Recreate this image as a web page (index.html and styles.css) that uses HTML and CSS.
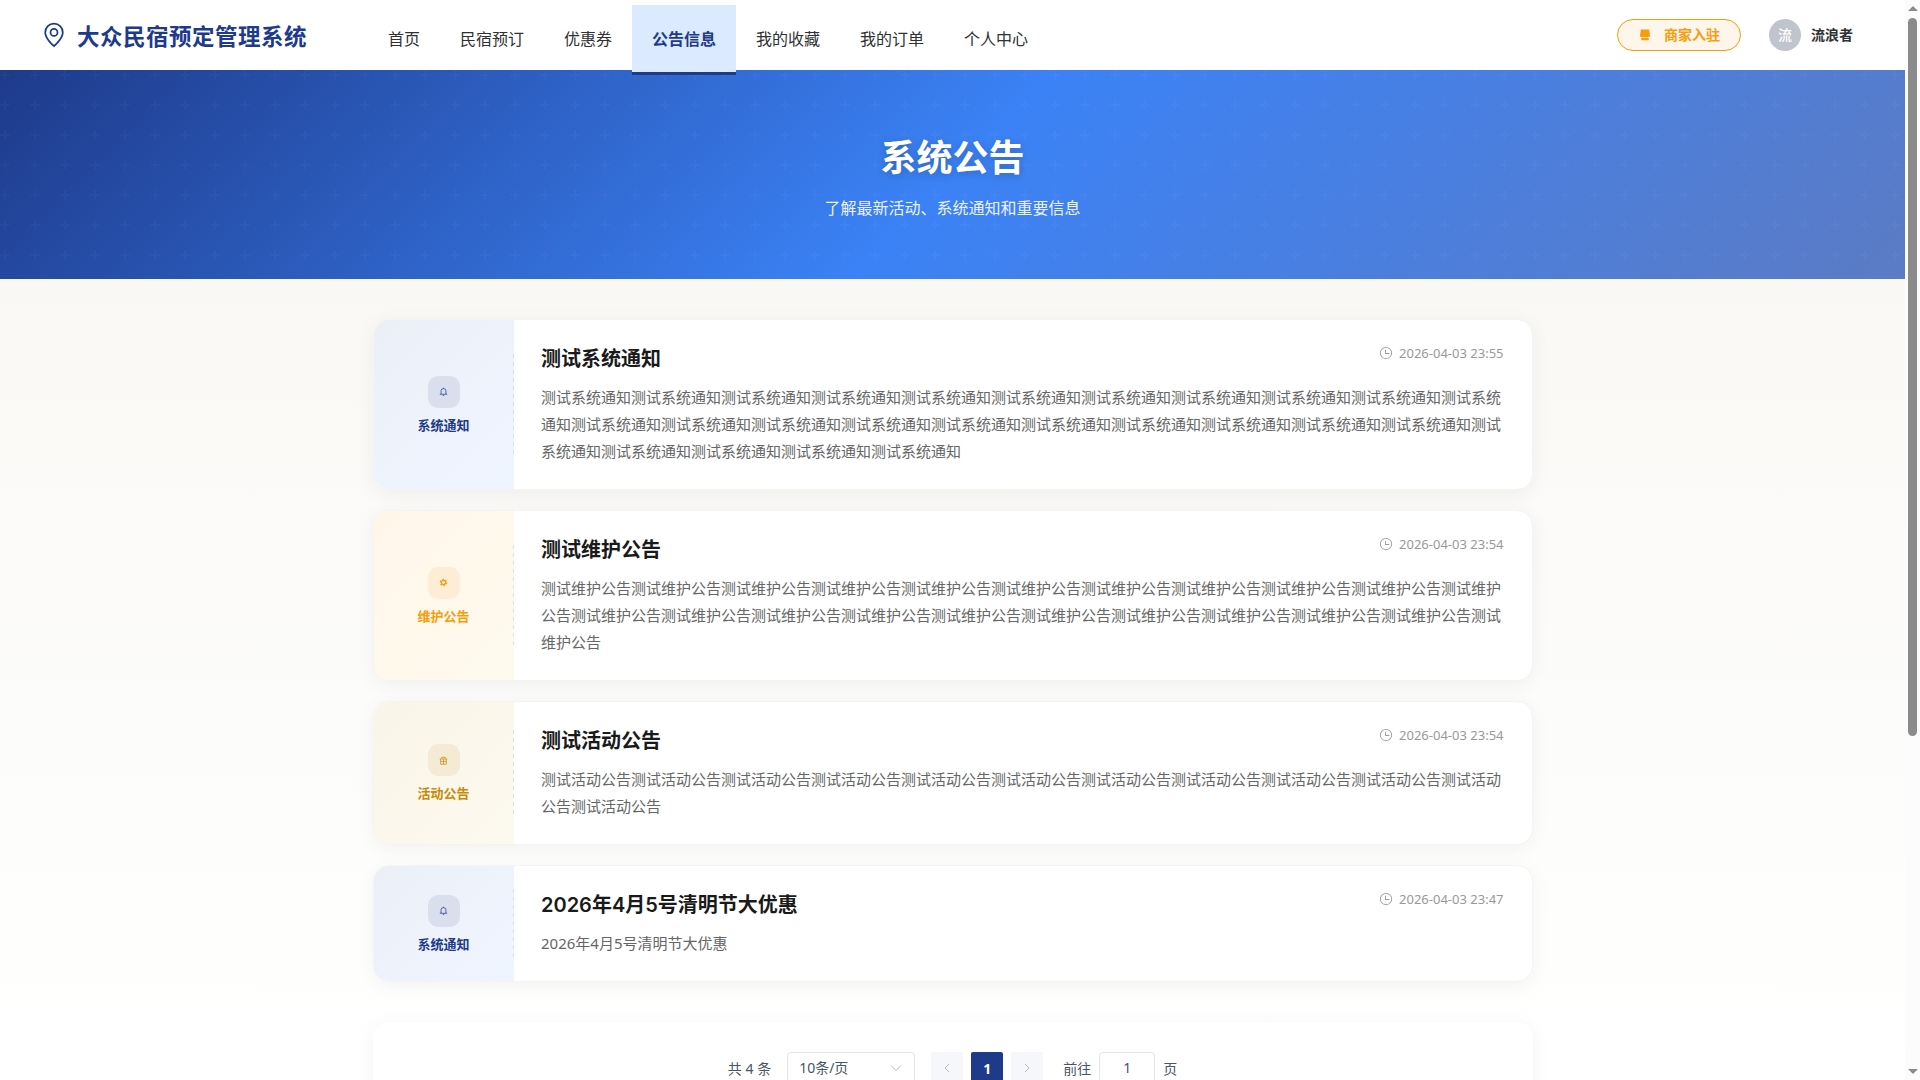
FILE: index.html
```html
<!DOCTYPE html>
<html lang="zh-CN">
<head>
    <meta charset="UTF-8">
    <meta name="viewport" content="width=device-width, initial-scale=1.0">
    <title>系统公告 - 大众民宿预定管理系统</title>
    <link rel="stylesheet" href="styles.css">
</head>
<body>
    <!-- Shared icons -->
    <svg class="icon-defs" aria-hidden="true">
        <symbol id="icon-bell" viewBox="0 0 10 10">
            <path d="M2.300 7.800V4.200q0-2.400 2.700-2.400t2.700 2.400v3.600M.9 8.100h8.200M5 .8v1M4.200 9.400h1.600" fill="none" stroke="currentColor" stroke-width=".8"/>
        </symbol>
        <symbol id="icon-clock" viewBox="0 0 1024 1024">
            <path fill="currentColor" d="M512 896a384 384 0 1 0 0-768 384 384 0 0 0 0 768m0 64a448 448 0 1 1 0-896 448 448 0 0 1 0 896"/>
            <path fill="currentColor" d="M480 256a32 32 0 0 1 32 32v256a32 32 0 0 1-64 0V288a32 32 0 0 1 32-32"/>
            <path fill="currentColor" d="M480 512h256q32 0 32 32t-32 32H480q-32 0-32-32t32-32"/>
        </symbol>
    </svg>

    <div class="window">
        <div class="page">
            <header class="header">
                <div class="logo">
                    <svg class="logo-icon" viewBox="0 0 1024 1024">
                        <path fill="currentColor" d="M800 416a288 288 0 1 0-576 0c0 118.144 94.528 272.128 288 456.576C705.472 688.128 800 534.144 800 416M512 960C277.312 746.688 160 565.312 160 416a352 352 0 0 1 704 0c0 149.312-117.312 330.688-352 544"/>
                        <path fill="currentColor" d="M512 512a96 96 0 1 0 0-192 96 96 0 0 0 0 192m0 64a160 160 0 1 1 0-320 160 160 0 0 1 0 320"/>
                    </svg>
                    <span class="logo-text">大众民宿预定管理系统</span>
                </div>
                <nav class="nav">
                    <a class="nav-item" href="#">首页</a>
                    <a class="nav-item" href="#">民宿预订</a>
                    <a class="nav-item" href="#">优惠券</a>
                    <a class="nav-item active" href="#">公告信息</a>
                    <a class="nav-item" href="#">我的收藏</a>
                    <a class="nav-item" href="#">我的订单</a>
                    <a class="nav-item" href="#">个人中心</a>
                </nav>
                <div class="user-area">
                    <a class="merchant-btn" href="#">
                        <svg class="merchant-icon" viewBox="0 0 12 12">
                            <path fill="currentColor" d="M1.800.5h8.400l.8 6.600a1 1 0 0 1-1.700.6 1.200 1.200 0 0 1-2.200 0 1.200 1.200 0 0 1-2.200 0 1.200 1.200 0 0 1-2.200 0A1 1 0 0 1 1 7.100zM2.200 9h7.600v1.600a.7.7 0 0 1-.7.7H2.900a.7.7 0 0 1-.7-.7z"/>
                        </svg>
                        <span>商家入驻</span>
                    </a>
                    <div class="user">
                        <span class="avatar">流</span>
                        <span class="user-name">流浪者</span>
                    </div>
                </div>
            </header>

            <section class="hero">
                <h1 class="hero-title">系统公告</h1>
                <p class="hero-subtitle">了解最新活动、系统通知和重要信息</p>
            </section>

            <main class="container">
                <article class="notice notice-system">
                    <div class="notice-side">
                        <div class="notice-icon"><svg viewBox="0 0 10 10"><use href="#icon-bell"/></svg></div>
                        <span class="notice-type">系统通知</span>
                    </div>
                    <div class="notice-body">
                        <div class="notice-head">
                            <h2 class="notice-title">测试系统通知</h2>
                            <span class="notice-time"><svg><use href="#icon-clock"/></svg>2026-04-03 23:55</span>
                        </div>
                        <p class="notice-text">测试系统通知测试系统通知测试系统通知测试系统通知测试系统通知测试系统通知测试系统通知测试系统通知测试系统通知测试系统通知测试系统通知测试系统通知测试系统通知测试系统通知测试系统通知测试系统通知测试系统通知测试系统通知测试系统通知测试系统通知测试系统通知测试系统通知测试系统通知测试系统通知测试系统通知测试系统通知</p>
                    </div>
                </article>

                <article class="notice notice-maintain">
                    <div class="notice-side">
                        <div class="notice-icon">
                            <svg viewBox="0 0 10 10">
                                <circle cx="5" cy="5" r="2.300" fill="none" stroke="currentColor" stroke-width="1.300"/>
                                <circle cx="5" cy="5" r="3.500" fill="none" stroke="currentColor" stroke-width="1.400" stroke-dasharray="1.830 1.830"/>
                            </svg>
                        </div>
                        <span class="notice-type">维护公告</span>
                    </div>
                    <div class="notice-body">
                        <div class="notice-head">
                            <h2 class="notice-title">测试维护公告</h2>
                            <span class="notice-time"><svg><use href="#icon-clock"/></svg>2026-04-03 23:54</span>
                        </div>
                        <p class="notice-text">测试维护公告测试维护公告测试维护公告测试维护公告测试维护公告测试维护公告测试维护公告测试维护公告测试维护公告测试维护公告测试维护公告测试维护公告测试维护公告测试维护公告测试维护公告测试维护公告测试维护公告测试维护公告测试维护公告测试维护公告测试维护公告测试维护公告</p>
                    </div>
                </article>

                <article class="notice notice-activity">
                    <div class="notice-side">
                        <div class="notice-icon">
                            <svg viewBox="0 0 10 10">
                                <path d="M.8 3.300h8.400M1.800 3.300v5.800h6.400V3.300M2 6h6M5 3.300V9M3 3V1.500h4V3" fill="none" stroke="currentColor" stroke-width=".8"/>
                            </svg>
                        </div>
                        <span class="notice-type">活动公告</span>
                    </div>
                    <div class="notice-body">
                        <div class="notice-head">
                            <h2 class="notice-title">测试活动公告</h2>
                            <span class="notice-time"><svg><use href="#icon-clock"/></svg>2026-04-03 23:54</span>
                        </div>
                        <p class="notice-text">测试活动公告测试活动公告测试活动公告测试活动公告测试活动公告测试活动公告测试活动公告测试活动公告测试活动公告测试活动公告测试活动公告测试活动公告</p>
                    </div>
                </article>

                <article class="notice notice-system">
                    <div class="notice-side">
                        <div class="notice-icon"><svg viewBox="0 0 10 10"><use href="#icon-bell"/></svg></div>
                        <span class="notice-type">系统通知</span>
                    </div>
                    <div class="notice-body">
                        <div class="notice-head">
                            <h2 class="notice-title">2026年4月5号清明节大优惠</h2>
                            <span class="notice-time"><svg><use href="#icon-clock"/></svg>2026-04-03 23:47</span>
                        </div>
                        <p class="notice-text">2026年4月5号清明节大优惠</p>
                    </div>
                </article>

                <div class="pagination">
                    <span class="total">共 4 条</span>
                    <div class="page-size">
                        <span>10条/页</span>
                        <svg viewBox="0 0 14 14"><path d="M2 4.500l5 5 5-5"/></svg>
                    </div>
                    <div class="pager">
                        <button class="page-btn"><svg viewBox="0 0 14 14"><path d="M9 3L5 7l4 4"/></svg></button>
                        <button class="page-btn current">1</button>
                        <button class="page-btn"><svg viewBox="0 0 14 14"><path d="M5 3l4 4-4 4"/></svg></button>
                    </div>
                    <div class="jump">
                        <span class="jump-label">前往</span>
                        <span class="jump-input">1</span>
                        <span class="jump-label">页</span>
                    </div>
                </div>
            </main>
        </div>

        <div class="scrollbar">
            <span class="arrow arrow-up"></span>
            <span class="thumb"></span>
            <span class="arrow arrow-down"></span>
        </div>
    </div>
</body>
</html>
```
FILE: styles.css
```css
* {
    box-sizing: border-box;
}

body {
    margin: 0;
    height: 1080px;
    overflow: hidden;
    font-family: "Noto Sans", "Noto Sans CJK SC", sans-serif;
    font-size: 14px;
    color: #303133;
}

h1, h2, p {
    margin: 0;
}

a {
    color: inherit;
    text-decoration: none;
}

.icon-defs {
    display: none;
}

.window {
    display: flex;
    height: 1080px;
}

.page {
    width: 1905px;
    height: 1080px;
    overflow: hidden;
    background: linear-gradient(180deg, #f9f8f5 0%, #f9f8f5 25%, #fefefd 85%, #ffffff 100%);
}

/* Header */
.header {
    display: flex;
    align-items: center;
    height: 70px;
    padding: 0 52px 0 40px;
    background: #fff;
}

.logo {
    display: flex;
    align-items: center;
    gap: 9px;
    width: 328px;
    color: #1e3a8a;
}

.logo-icon {
    width: 28px;
    height: 28px;
}

.logo-text {
    font-size: 22.5px;
    font-weight: 700;
    letter-spacing: 0.5px;
    line-height: 34px;
    white-space: nowrap;
    padding-top: 4px;
}

.nav {
    display: flex;
    align-self: flex-start;
    padding-top: 5px;
    z-index: 2;
}

.nav-item {
    height: 70px;
    padding: 1px 20px 0;
    border-bottom: 3px solid transparent;
    font-size: 16px;
    line-height: 67px;
}

.nav-item.active {
    background: #dbeafe;
    border-bottom-color: #1e3a8a;
    color: #1e3a8a;
    font-weight: 600;
}

.user-area {
    display: flex;
    align-items: center;
    gap: 28px;
    margin-left: auto;
}

.merchant-btn {
    display: flex;
    align-items: center;
    gap: 13px;
    width: 124px;
    height: 32px;
    padding-left: 21px;
    border: 1px solid #f59e0b;
    border-radius: 16px;
    background: #fef5eb;
    color: #f59e0b;
    font-weight: 600;
}

.merchant-btn span,
.user-name {
    padding-bottom: 2px;
}

.merchant-icon {
    width: 12px;
    height: 12px;
}

.user {
    display: flex;
    align-items: center;
    gap: 10px;
}

.avatar {
    width: 32px;
    height: 32px;
    border-radius: 50%;
    background: #c0c4cc;
    color: #fff;
    line-height: 32px;
    text-align: center;
    font-weight: 500;
}

.user-name {
    font-weight: 600;
}

/* Banner */
.hero {
    height: 209px;
    padding-top: 60px;
    text-align: center;
    color: #fff;
    background:
        url("data:image/svg+xml,%3Csvg width='30' height='30' xmlns='http://www.w3.org/2000/svg'%3E%3Cpath fill='%23fff' fill-opacity='.022' d='M6 4V0H4v4H0v2h4v4h2V6h4V4H6z'/%3E%3C/svg%3E"),
        linear-gradient(135deg, #1e3a8a 0%, #3b82f6 50%, #5b7bc4 100%);
}

.hero-title {
    font-size: 36px;
    font-weight: 700;
    line-height: 56px;
    text-shadow: 0 2px 8px rgba(0, 0, 0, 0.2);
}

.hero-subtitle {
    margin-top: 9px;
    font-size: 16px;
    line-height: 26px;
    opacity: 0.9;
}

/* Notice list */
.container {
    width: 1160px;
    margin: 40px auto 0;
    display: flex;
    flex-direction: column;
    gap: 20px;
}

.notice {
    display: flex;
    overflow: hidden;
    border: 1px solid #f5f4f2;
    border-radius: 16px;
    background: #fff;
    box-shadow: 0 4px 20px rgba(0, 0, 0, 0.05);
}

.notice-side {
    position: relative;
    display: flex;
    flex-direction: column;
    align-items: center;
    justify-content: center;
    gap: 8px;
    width: 140px;
}

/* dashed divider on the right edge */
.notice-side::after {
    content: "";
    position: absolute;
    right: 0;
    top: 20%;
    width: 1px;
    height: 60%;
    background: repeating-linear-gradient(180deg, #dcdfe6 0, #dcdfe6 4px, transparent 4px, transparent 8px);
}

.notice-icon {
    display: flex;
    align-items: center;
    justify-content: center;
    width: 32px;
    height: 32px;
    border-radius: 10px;
}

.notice-icon svg {
    width: 9px;
    height: 9px;
}

.notice-type {
    font-size: 13px;
    font-weight: 600;
    line-height: 18px;
}

.notice-system .notice-side {
    background: linear-gradient(135deg, #eceff3 0%, #ecf0f9 15%, #eff5ff 100%);
    color: #1e3a8a;
}

.notice-system .notice-icon {
    background: #dadfee;
}

.notice-maintain .notice-side {
    background: linear-gradient(135deg, #fff6ea 0%, #fefaed 100%);
    color: #f59e0b;
}

.notice-maintain .notice-icon {
    background: #feedd5;
}

.notice-activity .notice-side {
    background: linear-gradient(135deg, #faf5e9 0%, #fcf9ee 100%);
    color: #ca8a04;
}

.notice-activity .notice-icon {
    background: #f5ead5;
}

.notice-body {
    flex: 1;
    padding: 24px 28px 24px 27.5px;
}

.notice-head {
    display: flex;
    justify-content: space-between;
    margin-bottom: 12px;
}

.notice-title {
    height: 28px;
    font-family: Inter, "Noto Sans CJK SC", sans-serif;
    font-size: 20px;
    font-weight: 600;
    line-height: 30px;
    color: #1a1a1a;
}

.notice-time {
    display: flex;
    align-items: center;
    gap: 6px;
    height: 18px;
    font-size: 13px;
    color: #999;
}

.notice-time svg {
    width: 14px;
    height: 14px;
}

.notice-text {
    font-size: 15px;
    line-height: 27px;
    color: #666;
    word-break: break-all;
}

/* Pagination */
.pagination {
    display: flex;
    justify-content: center;
    gap: 16px;
    margin-top: 20px;
    padding: 30px 0;
    border-radius: 16px;
    background: #fff;
    box-shadow: 0 4px 20px rgba(0, 0, 0, 0.05);
    line-height: 32px;
    color: #475569;
}

.total,
.jump-label {
    padding-top: 1px;
}

.page-size {
    display: flex;
    align-items: center;
    justify-content: space-between;
    width: 128px;
    height: 32px;
    padding: 0 11px;
    border: 1px solid #dfe4ee;
    border-radius: 4px;
}

.pagination svg {
    width: 14px;
    height: 14px;
    fill: none;
    stroke: #b4b8c0;
    stroke-width: 1;
}

.pager {
    display: flex;
    gap: 8px;
}

.page-btn {
    display: flex;
    align-items: center;
    justify-content: center;
    width: 32px;
    height: 32px;
    padding: 0;
    border: none;
    border-radius: 2px;
    background: #f5f7fb;
    font-family: inherit;
    font-size: 14px;
}

.page-btn.current {
    background: #1e3a8a;
    color: #fff;
    font-weight: 700;
}

.jump {
    display: flex;
    gap: 8px;
    margin-left: 4px;
}

.jump-input {
    width: 56px;
    height: 32px;
    border: 1px solid #dfe4ee;
    border-radius: 4px;
    line-height: 30px;
    text-align: center;
}

/* Scrollbar */
.scrollbar {
    display: flex;
    flex-direction: column;
    align-items: center;
    width: 15px;
    height: 1080px;
    padding: 6px 0;
    background: #fcfcfc;
}

.arrow {
    border-left: 5px solid transparent;
    border-right: 5px solid transparent;
}

.arrow-up {
    border-bottom: 5px solid #8b8b8b;
}

.arrow-down {
    margin-top: auto;
    border-top: 5px solid #8b8b8b;
}

.thumb {
    width: 9px;
    height: 718px;
    margin-top: 7px;
    border-radius: 5px;
    background: #8b8b8b;
}
```
